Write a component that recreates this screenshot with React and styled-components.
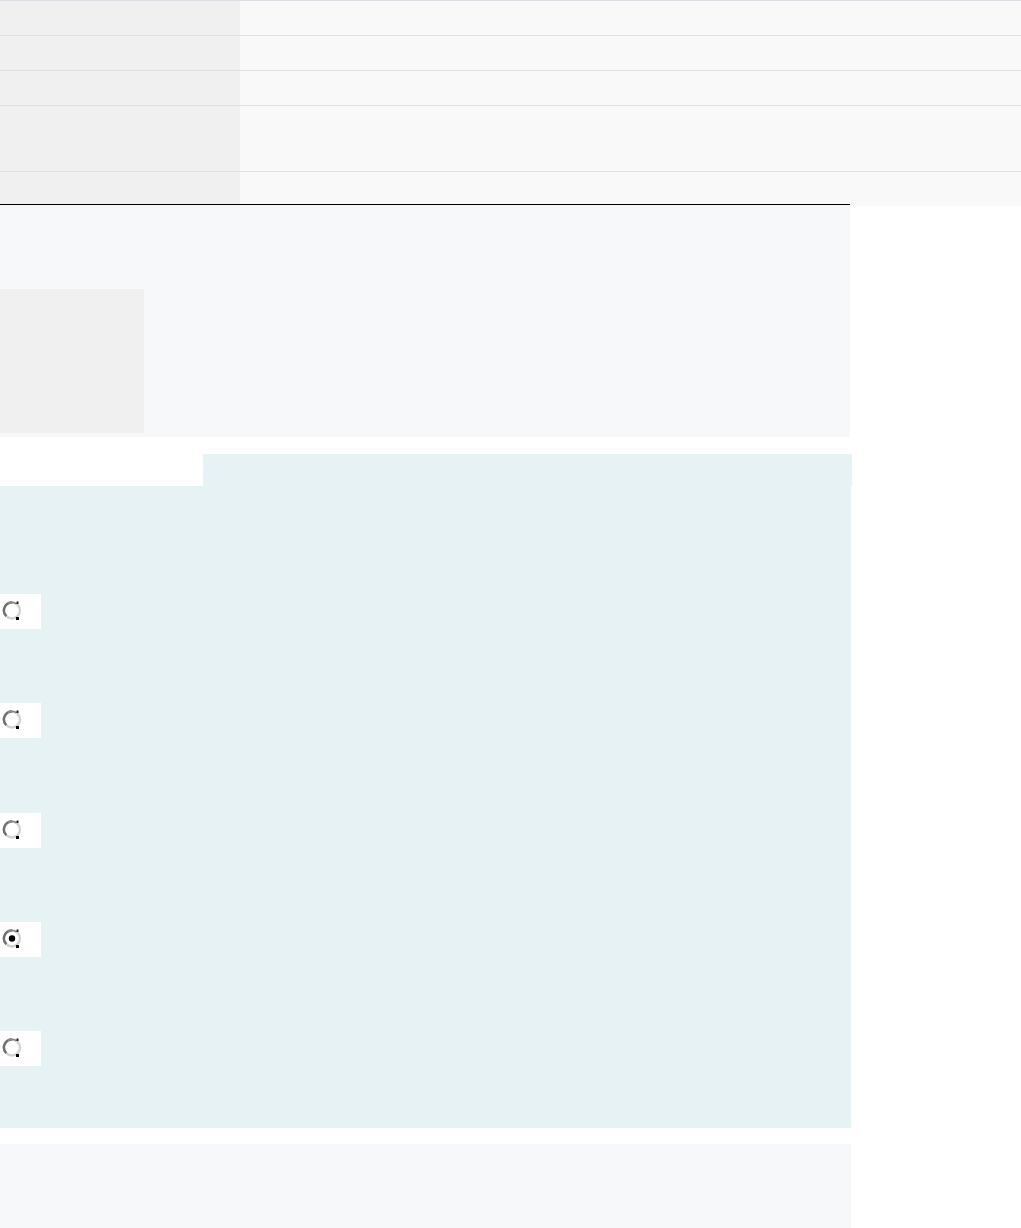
import React from 'react';
import styled, { createGlobalStyle } from 'styled-components';

const GlobalStyle = createGlobalStyle`
    html, body {
        margin: 0;
        padding: 0;
        background: #fff;
        font-family: "Liberation Sans", Arial, sans-serif;
    }
`;

const Page = styled.div`
    display: flex;
    flex-direction: column;
    width: 1021px;
`;

const InfoTable = styled.div`
    display: grid;
    grid-template-columns: 240px 1fr;
    border-top: 1px solid #dcdde3;
`;

const Cell = styled.div`
    height: ${props => props.tall ? 65 : 34}px;
    background: ${props => props.label ? '#f0f0f0' : '#f9f9f9'};
    border-bottom: ${props => props.last ? 'none' : '1px solid #e0e0e0'};
`;

const MediaPanel = styled.div`
    position: relative;
    width: 850px;
    margin-top: -2px;
    border-top: 1px solid #000;
    background: #f7f8fa;
    padding: 84px 0 4px;
`;

const Thumb = styled.div`
    width: 144px;
    height: 144px;
    background: #f0f0f0;
`;

const Tab = styled.div`
    margin: 17px 0 0 203px;
    width: 649px;
    height: 32px;
    background: #e6f2f4;
`;

const ChoicePanel = styled.div`
    width: 851px;
    background: #e6f2f4;
    padding: 108px 0 62px;
    display: flex;
    flex-direction: column;
    gap: 74.25px;
`;

const Choice = styled.label`
    display: flex;
    align-items: center;
    width: 41px;
    height: 35px;
    background: #fff;
    padding: 0 0 2px 2px;
    box-sizing: border-box;
`;

const FooterPanel = styled.div`
    margin-top: 16px;
    width: 851px;
    height: 120px;
    background: #f7f8fa;
`;

const RadioMark = ({ checked }) => (
    <svg width="20" height="21" viewBox="0 0 20 21">
        <circle cx="10" cy="10.5" r="8" fill="#fff" stroke="#d2d2d2" strokeWidth="2.4"/>
        <path d="M10 2.5 A8 8 0 0 0 4.3 16.2" fill="none" stroke="#6e6e6e" strokeWidth="2.4"/>
        <path d="M6 3.6 A8 8 0 0 1 14.5 3.8" fill="none" stroke="#8a8a8a" strokeWidth="1.8"/>
        <rect x="14.5" y="1.5" width="2" height="2.5" fill="#222"/>
        <rect x="14" y="17" width="3" height="3" fill="#000"/>
        {checked && <circle cx="10" cy="10.5" r="3.2" fill="#000"/>}
    </svg>
);

const rows = [false, false, false, true, false];
const choices = [false, false, false, true, false];

export default () => (
    <Page>
        <GlobalStyle/>
        <InfoTable>
            {rows.map((tall, i) => (
                <React.Fragment key={i}>
                    <Cell label tall={tall} last={i === rows.length - 1}/>
                    <Cell tall={tall} last={i === rows.length - 1}/>
                </React.Fragment>
            ))}
        </InfoTable>
        <MediaPanel>
            <Thumb/>
        </MediaPanel>
        <Tab/>
        <ChoicePanel>
            {choices.map((checked, i) => (
                <Choice key={i}>
                    <RadioMark checked={checked}/>
                </Choice>
            ))}
        </ChoicePanel>
        <FooterPanel/>
    </Page>
);
